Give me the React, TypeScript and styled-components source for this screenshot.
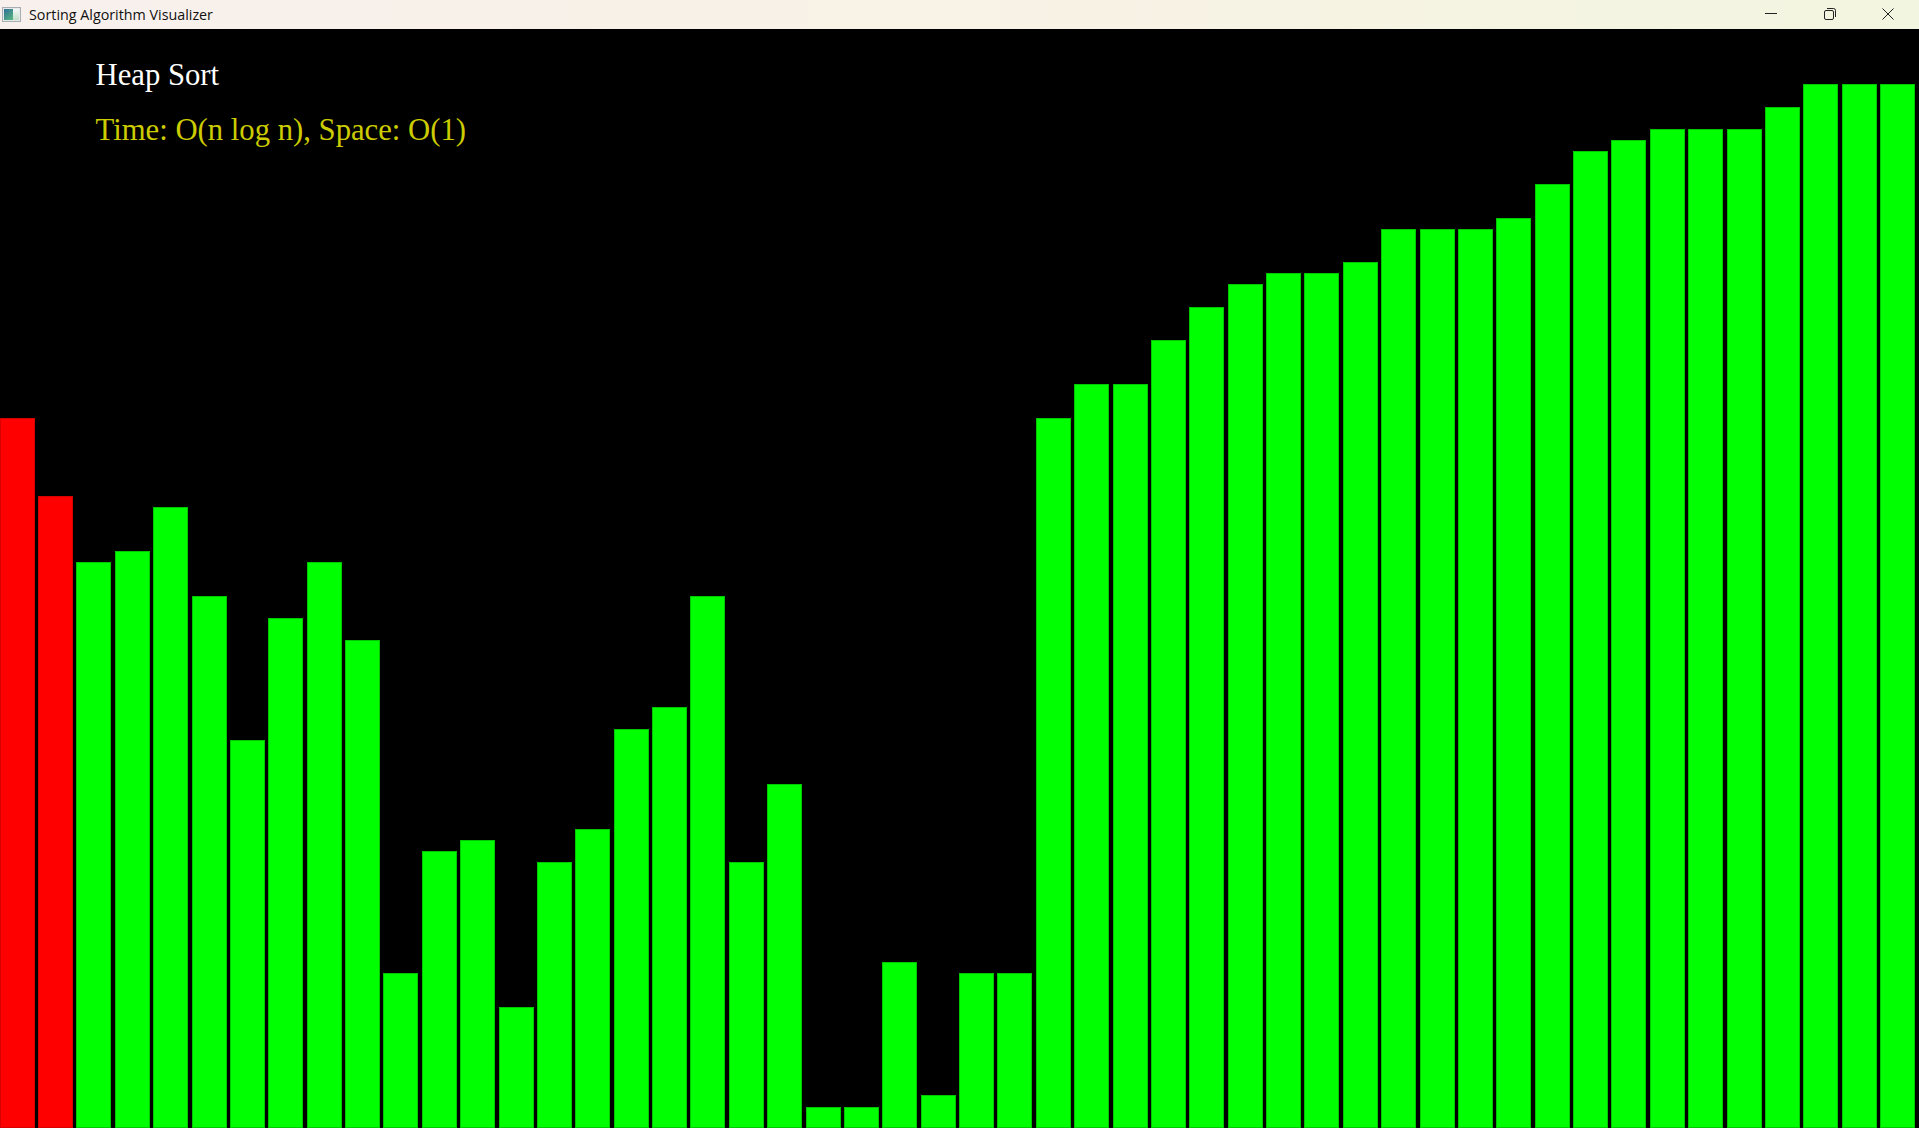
import React from "react";
import styled, { createGlobalStyle } from "styled-components";

const Global = createGlobalStyle`
  html, body { margin: 0; padding: 0; background: #000; overflow: hidden; }
  #root { width: 1919px; height: 1128px; }
`;

const Window = styled.div`
  width: 1919px;
  height: 1128px;
  display: flex;
  flex-direction: column;
  overflow: hidden;
`;

const TitleBar = styled.header`
  height: 29px;
  flex: none;
  display: flex;
  align-items: center;
  background: linear-gradient(90deg, #f8f0ed 0%, #f9f2e6 50%, #f2f5e0 100%);
`;

const AppIcon = styled.svg`
  width: 19px;
  height: 15px;
  margin-left: 2px;
  flex: none;
`;

const TitleText = styled.span`
  margin-left: 8px;
  flex: 1;
  font: 14.3px "Open Sans", "Noto Sans", sans-serif;
  color: #111;
  white-space: nowrap;
`;

const Controls = styled.div`
  display: flex;
  align-items: center;
  gap: 46.5px;
  padding: 0 25px 1px 0;
`;

const ControlIcon = styled.svg`
  width: 12px;
  height: 12px;
  display: block;
`;

const Stage = styled.main`
  position: relative;
  flex: 1;
  margin-left: -0.3px;
  background: #000;
  display: grid;
  grid-template-columns: repeat(50, 35px);
  column-gap: 3.38px;
  align-items: end;
`;

const Bar = styled.div<{ $sorting: boolean }>`
  background: ${(p) => (p.$sorting ? "#ff0000" : "#00ff00")};
  box-shadow: inset 0 0 0 1px ${(p) => (p.$sorting ? "#d80000" : "#00c800")};
`;

const Legend = styled.div`
  position: absolute;
  left: 95.8px;
  top: 28px;
  font-family: "Liberation Serif", "Times New Roman", serif;
`;

const Heading = styled.div`
  font-size: 30.7px;
  line-height: 36px;
  color: #ffffff;
`;

const Complexity = styled.div`
  font-size: 30.7px;
  line-height: 36px;
  margin-top: 19px;
  color: #cccc00;
`;

const UNIT = 11.11;
const INSET = 0.8;
const VALUES = [
  64, 57, 51, 52, 56, 48, 35, 46, 51, 44, 14, 25, 26, 11, 24, 27, 36, 38, 48, 24, 31, 2, 2, 15, 3,
  14, 14, 64, 67, 67, 71, 74, 76, 77, 77, 78, 81, 81, 81, 82, 85, 88, 89, 90, 90, 90, 92, 94, 94, 94,
];

export default function App() {
  return (
    <Window>
      <Global />
      <TitleBar>
        <AppIcon viewBox="0 0 19 15">
          <defs>
            <linearGradient id="iconLeft" x1="0" y1="0" x2="0.7" y2="1">
              <stop offset="0" stopColor="#2f6f97" />
              <stop offset="1" stopColor="#55b083" />
            </linearGradient>
            <linearGradient id="iconRight" x1="0" y1="0" x2="0" y2="1">
              <stop offset="0" stopColor="#f6f8f8" />
              <stop offset="1" stopColor="#bfe0c8" />
            </linearGradient>
          </defs>
          <rect x="0.5" y="0.5" width="18" height="14" fill="#e6e9ea" stroke="#a9aeb2" />
          <rect x="2" y="2" width="9" height="11" fill="url(#iconLeft)" />
          <rect x="11" y="2" width="6" height="11" fill="url(#iconRight)" />
        </AppIcon>
        <TitleText>Sorting Algorithm Visualizer</TitleText>
        <Controls>
          <ControlIcon viewBox="0 0 12 12">
            <path d="M0 5.5H12" stroke="#222" strokeWidth="1" fill="none" />
          </ControlIcon>
          <ControlIcon viewBox="0 0 12 12">
            <rect x="0.5" y="2.5" width="9" height="9" rx="1.5" stroke="#222" fill="none" />
            <path d="M3 0.5H9.5A2 2 0 0 1 11.5 2.5V9" stroke="#222" fill="none" />
          </ControlIcon>
          <ControlIcon viewBox="0 0 12 12">
            <path d="M0.5 0.5L11.5 11.5M11.5 0.5L0.5 11.5" stroke="#222" strokeWidth="1" fill="none" />
          </ControlIcon>
        </Controls>
      </TitleBar>
      <Stage>
        {VALUES.map((v, i) => (
          <Bar key={i} $sorting={i < 2} style={{ height: v * UNIT - INSET }} />
        ))}
        <Legend>
          <Heading>Heap Sort</Heading>
          <Complexity>Time: O(n log n), Space: O(1)</Complexity>
        </Legend>
      </Stage>
    </Window>
  );
}
